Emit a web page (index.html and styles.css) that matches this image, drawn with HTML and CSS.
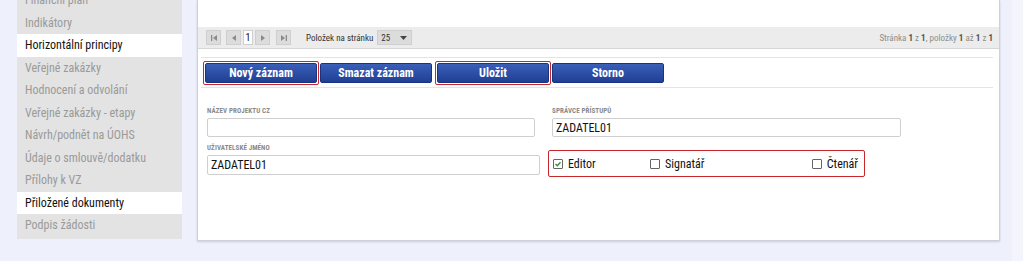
FILE: index.html
```html
<!DOCTYPE html>
<html lang="cs">
<head>
  <meta charset="UTF-8">
  <title>Přiložené dokumenty</title>
  <link rel="stylesheet" href="styles.css">
</head>
<body>
  <div class="page">
    <ul class="side-menu">
      <li>Finanční plán</li>
      <li>Indikátory</li>
      <li class="active">Horizontální principy</li>
      <li>Veřejné zakázky</li>
      <li>Hodnocení a odvolání</li>
      <li>Veřejné zakázky - etapy</li>
      <li>Návrh/podnět na ÚOHS</li>
      <li>Údaje o smlouvě/dodatku</li>
      <li>Přílohy k VZ</li>
      <li class="active">Přiložené dokumenty</li>
      <li>Podpis žádosti</li>
    </ul>

    <div class="panel">
      <div class="grid-body"></div>

      <div class="pager">
        <div class="pager-nav">
          <span class="pg-btn">
            <svg width="8" height="8" viewBox="0 0 8 8"><rect x="1" y="1" width="1.3" height="6" fill="#8a8a8a"/><path d="M7 1 L3 4 L7 7 Z" fill="#8a8a8a"/></svg>
          </span>
          <span class="pg-btn pg-prev">
            <svg width="8" height="8" viewBox="0 0 8 8"><path d="M6 1 L2 4 L6 7 Z" fill="#8a8a8a"/></svg>
          </span>
          <span class="pg-current">1</span>
          <span class="pg-btn pg-next">
            <svg width="8" height="8" viewBox="0 0 8 8"><path d="M2 1 L6 4 L2 7 Z" fill="#8a8a8a"/></svg>
          </span>
          <span class="pg-btn pg-last">
            <svg width="8" height="8" viewBox="0 0 8 8"><path d="M1 1 L5 4 L1 7 Z" fill="#8a8a8a"/><rect x="5.7" y="1" width="1.3" height="6" fill="#8a8a8a"/></svg>
          </span>
          <span class="pg-label">Položek na stránku</span>
          <span class="pg-select">25
            <svg width="7" height="4" viewBox="0 0 7 4"><path d="M0 0 L7 0 L3.5 4 Z" fill="#444"/></svg>
          </span>
        </div>
        <div class="pager-info">Stránka <b>1</b> z <b>1</b>, položky <b>1</b> až <b>1</b> z <b>1</b></div>
      </div>

      <div class="toolbar">
        <span class="marked"><button class="btn">Nový záznam</button></span>
        <button class="btn">Smazat záznam</button>
        <span class="marked"><button class="btn">Uložit</button></span>
        <button class="btn">Storno</button>
      </div>

      <div class="form">
        <div class="field">
          <label>Název projektu CZ</label>
          <div class="input"></div>
        </div>
        <div class="field field-right">
          <label>Správce přístupů</label>
          <div class="input">ZADATEL01</div>
        </div>
        <div class="field field-name">
          <label>Uživatelské jméno</label>
          <div class="input">ZADATEL01</div>
        </div>
        <div class="roles">
          <span class="check"><span class="box on">
            <svg width="8" height="8" viewBox="0 0 8 8"><path d="M1.5 4 L3.3 5.8 L6.5 2.2" stroke="#2e8b3a" stroke-width="1.3" fill="none"/></svg>
          </span>Editor</span>
          <span class="check"><span class="box"></span>Signatář</span>
          <span class="check check-last"><span class="box"></span>Čtenář</span>
        </div>
      </div>
    </div>

    <div class="right-strip"></div>
  </div>
</body>
</html>
```

FILE: styles.css
```css
body {
  margin: 0;
  background-color: #eef0fb;
  font-family: "Roboto Condensed", "Liberation Sans Narrow", "DejaVu Sans Condensed", sans-serif;
  overflow: hidden;
}

.page {
  display: flex;
  align-items: flex-start;
  height: 261px;
}

.side-menu {
  list-style: none;
  margin: -11px 0 0 17px;
  padding: 0 0 2px 0;
  width: 165px;
  background-color: #e3e3e3;
}

.side-menu li {
  height: 22.5px;
  line-height: 22.5px;
  padding-left: 8px;
  font-size: 12px;
  color: #9a9a9a;
  box-sizing: border-box;
}

.side-menu li.active {
  background-color: #fff;
  color: #111;
}

.panel {
  margin-left: 15px;
  width: 801px;
  height: 240px;
  background-color: #fff;
  border: 1px solid #cfd0d8;
  border-top: none;
  box-shadow: 0 1px 2px rgba(0, 0, 0, 0.15);
}

.grid-body {
  height: 27px;
}

.pager {
  display: flex;
  justify-content: space-between;
  align-items: center;
  height: 21px;
  background-color: #ececec;
  border-bottom: 1px solid #d6d6d6;
  padding: 0 6px 0 8px;
}

.pager-nav {
  display: flex;
  align-items: center;
}

.pg-btn {
  display: flex;
  align-items: center;
  justify-content: center;
  width: 15px;
  height: 15px;
  background-color: #dcdcdc;
  border: 1px solid #cfcfcf;
  box-sizing: border-box;
}

.pg-prev {
  margin-left: 5px;
}

.pg-current {
  width: 10px;
  height: 15px;
  margin: 0 2px;
  background-color: #fff;
  border: 1px solid #cfcfcf;
  box-sizing: border-box;
  font-size: 10px;
  line-height: 13px;
  text-align: center;
  color: #111;
}

.pg-last {
  margin-left: 6px;
}

.pg-label {
  margin-left: 15px;
  font-size: 9px;
  color: #333;
}

.pg-select {
  display: flex;
  align-items: center;
  justify-content: space-between;
  margin-left: 4px;
  width: 35px;
  height: 15px;
  padding: 0 4px 0 3px;
  box-sizing: border-box;
  background-color: #dcdcdc;
  border: 1px solid #cfcfcf;
  font-size: 9px;
  color: #333;
}

.pager-info {
  font-size: 9px;
  color: #8c8c8c;
}

.pager-info b {
  color: #555;
}

.toolbar {
  display: flex;
  align-items: center;
  margin: 8px 6px 0 3px;
  padding: 3px 0 2px 2px;
  border-top: 1px solid #e4e4e4;
  border-bottom: 1px solid #e4e4e4;
}

.marked {
  display: flex;
  padding: 1px;
  border: 1.5px solid #c8262d;
  border-radius: 2px;
}

.btn {
  display: block;
  height: 20px;
  border: 1px solid #173480;
  border-radius: 2px;
  background: linear-gradient(#3a5fb8, #1f3f93);
  color: #fff;
  font-family: inherit;
  font-size: 12px;
  font-weight: bold;
  padding: 0;
  width: 112px;
}

.toolbar > .btn {
  margin-left: 1px;
}

.toolbar > .btn + .marked {
  margin-left: 3px;
}

.toolbar > .btn:last-child {
  margin-left: 1px;
}

.form {
  display: grid;
  grid-template-columns: 333px 349px;
  column-gap: 12px;
  row-gap: 7px;
  padding: 19px 0 0 9px;
}

.field label {
  display: block;
  font-size: 7px;
  font-weight: bold;
  text-transform: uppercase;
  color: #8a8a8a;
  margin-bottom: 3px;
  letter-spacing: 0.1px;
}

.input {
  height: 19px;
  border: 1px solid #cfcfcf;
  border-radius: 2px;
  box-sizing: border-box;
  padding-left: 3px;
  font-size: 12px;
  line-height: 18px;
  color: #111;
}

.field:first-child .input {
  width: 328px;
}

.field-name .input {
  height: 20px;
}

.roles {
  display: flex;
  align-items: center;
  align-self: end;
  width: 317px;
  height: 27px;
  margin: 0 0 -2px -4px;
  border: 1.5px solid #c8262d;
  border-radius: 2px;
  box-sizing: border-box;
  padding-left: 4px;
  font-size: 12px;
  color: #111;
}

.check {
  display: flex;
  align-items: center;
  width: 97px;
}

.check-last {
  margin-left: auto;
  width: auto;
  padding-right: 6px;
}

.box {
  display: flex;
  align-items: center;
  justify-content: center;
  width: 10px;
  height: 10px;
  border: 1px solid #666;
  border-radius: 1px;
  box-sizing: border-box;
  margin-right: 5px;
}

.right-strip {
  margin-left: auto;
  width: 11px;
  height: 261px;
  background-color: #f4f5fc;
}
```
